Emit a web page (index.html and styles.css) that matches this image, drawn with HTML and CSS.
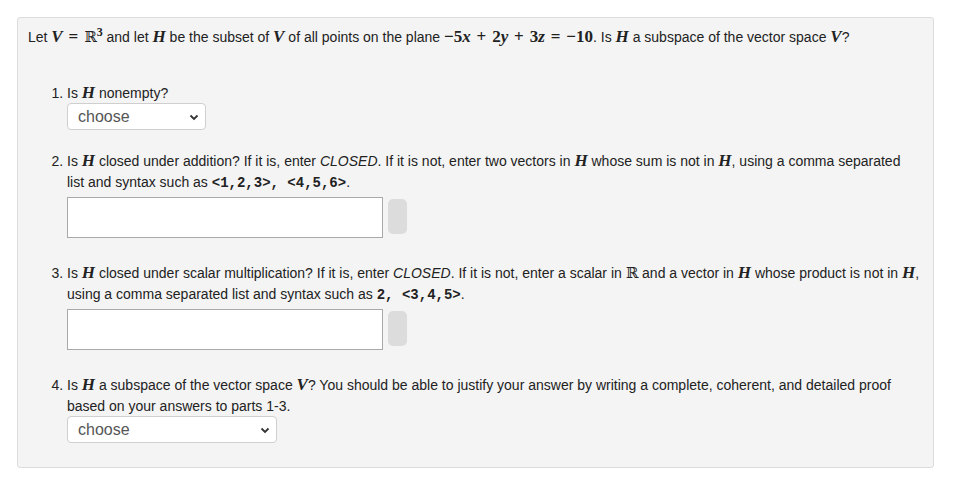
FILE: index.html
```html
<!DOCTYPE html>
<html>
<head>
<meta charset="utf-8">
<link rel="stylesheet" href="styles.css">
</head>
<body>
<div class="problem">
  <p class="intro">Let <span class="m">V</span> <span class="mo">=</span> <span class="bb">ℝ</span><sup class="sup">3</sup> and let <span class="m">H</span> be the subset of <span class="m">V</span> of all points on the plane <span class="mn">−5</span><span class="m">x</span> <span class="mo">+</span> <span class="mn">2</span><span class="m">y</span> <span class="mo">+</span> <span class="mn">3</span><span class="m">z</span> <span class="mo">=</span> <span class="mn">−10</span>. Is <span class="m">H</span> a subspace of the vector space <span class="m">V</span>?</p>
  <ol class="parts">
    <li class="part">
      <div class="q">Is <span class="m">H</span> nonempty?</div>
      <div class="sel sel-short">
        <span class="sel-text">choose</span>
        <svg class="chev" width="10" height="7" viewBox="0 0 10 7"><path d="M1.5 1.5 L5 5 L8.5 1.5" fill="none" stroke="#333" stroke-width="1.8"/></svg>
      </div>
    </li>
    <li class="part">
      <div class="q">Is <span class="m">H</span> closed under addition? If it is, enter <i>CLOSED</i>. If it is not, enter two vectors in <span class="m">H</span> whose sum is not in <span class="m">H</span>, using a comma separated<br>list and syntax such as <code>&lt;1,2,3&gt;, &lt;4,5,6&gt;</code>.</div>
      <div class="answer-row">
        <div class="field"></div>
        <div class="btn"></div>
      </div>
    </li>
    <li class="part">
      <div class="q">Is <span class="m">H</span> closed under scalar multiplication? If it is, enter <i>CLOSED</i>. If it is not, enter a scalar in <span class="bb">ℝ</span> and a vector in <span class="m">H</span> whose product is not in <span class="m">H</span>, using a comma separated list and syntax such as <code>2, &lt;3,4,5&gt;</code>.</div>
      <div class="answer-row">
        <div class="field"></div>
        <div class="btn"></div>
      </div>
    </li>
    <li class="part last">
      <div class="q">Is <span class="m">H</span> a subspace of the vector space <span class="m">V</span>? You should be able to justify your answer by writing a complete, coherent, and detailed proof based on your answers to parts 1-3.</div>
      <div class="sel sel-long">
        <span class="sel-text">choose</span>
        <svg class="chev" width="10" height="7" viewBox="0 0 10 7"><path d="M1.5 1.5 L5 5 L8.5 1.5" fill="none" stroke="#333" stroke-width="1.8"/></svg>
      </div>
    </li>
  </ol>
</div>
</body>
</html>
```
FILE: styles.css
```css
html, body {
  margin: 0;
  padding: 0;
  background: #ffffff;
}
body {
  font-family: "Liberation Sans", Arial, sans-serif;
  font-size: 14px;
  color: #222;
}
.problem {
  margin: 17px 19px 0 17px;
  background: #f4f4f4;
  border: 1px solid #dcdcdc;
  border-radius: 3px;
  padding: 9px 9px 24px 10px;
  line-height: 21px;
}
.intro {
  margin: 0;
}
.m {
  font-family: "Liberation Serif", "Times New Roman", serif;
  font-style: italic;
  font-weight: bold;
  font-size: 17px;
  line-height: 1;
}
.mn, .mo {
  font-family: "Liberation Serif", "Times New Roman", serif;
  font-weight: bold;
  font-size: 17px;
  line-height: 1;
}
.mo {
  padding: 0 2px;
}
.bb {
  font-family: "DejaVu Serif", serif;
  font-size: 15px;
  line-height: 1;
}
.sup {
  font-family: "Liberation Serif", serif;
  font-weight: bold;
  font-size: 12px;
  line-height: 0;
}
code {
  font-family: "Liberation Mono", "Courier New", monospace;
  font-weight: bold;
  font-size: 14px;
  line-height: 1;
}
.parts {
  margin: 34px 0 0 0;
  padding-left: 39px;
}
.part {
  margin-bottom: 24px;
}
.part.last {
  margin-bottom: 0;
}
.part:first-child {
  margin-bottom: 20px;
}
.q {
  padding-top: 1px;
}
.sel {
  position: relative;
  height: 27px;
  box-sizing: border-box;
  background: #fff;
  border: 1px solid #cfcfcf;
  border-radius: 4px;
  display: flex;
  align-items: center;
  padding-left: 10px;
}
.sel-short { width: 139px; margin-top: -1px; }
.sel-long { width: 210px; margin-top: -1px; }
.sel-text {
  font-size: 16px;
  color: #555;
}
.chev {
  position: absolute;
  right: 6px;
  top: 10px;
}
.answer-row {
  display: flex;
  align-items: flex-start;
  margin-top: 4px;
}
.field {
  width: 316px;
  height: 41px;
  box-sizing: border-box;
  background: #fff;
  border: 1px solid #a9a9a9;
}
.btn {
  width: 19px;
  height: 35px;
  margin: 2px 0 0 5px;
  background: #dcdcdc;
  border-radius: 5px;
}
```
